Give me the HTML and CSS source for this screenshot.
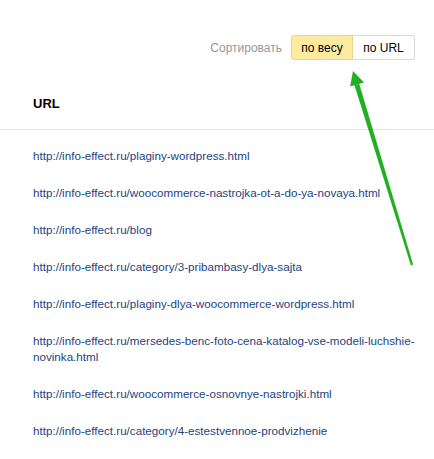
FILE: index.html
```html
<!DOCTYPE html>
<html lang="ru">
<head>
    <meta charset="UTF-8">
    <meta name="viewport" content="width=device-width, initial-scale=1.0">
    <title>URL</title>
    <link rel="stylesheet" href="styles.css">
</head>
<body>
    <div class="page">
        <div class="toolbar">
            <span class="sort-label">Сортировать</span>
            <div class="sort-group">
                <a href="javascript:;" class="sort-btn active">по весу</a>
                <a href="javascript:;" class="sort-btn">по URL</a>
            </div>
        </div>
        <div class="table-head">URL</div>
        <ul class="url-list">
            <li><a href="javascript:;">http://info-effect.ru/plaginy-wordpress.html</a></li>
            <li><a href="javascript:;">http://info-effect.ru/woocommerce-nastrojka-ot-a-do-ya-novaya.html</a></li>
            <li><a href="javascript:;">http://info-effect.ru/blog</a></li>
            <li><a href="javascript:;">http://info-effect.ru/category/3-pribambasy-dlya-sajta</a></li>
            <li><a href="javascript:;">http://info-effect.ru/plaginy-dlya-woocommerce-wordpress.html</a></li>
            <li><a href="javascript:;">http://info-effect.ru/mersedes-benc-foto-cena-katalog-vse-modeli-luchshie-novinka.html</a></li>
            <li><a href="javascript:;">http://info-effect.ru/woocommerce-osnovnye-nastrojki.html</a></li>
            <li><a href="javascript:;">http://info-effect.ru/category/4-estestvennoe-prodvizhenie</a></li>
        </ul>
        <!-- стрелка поверх страницы -->
        <svg class="arrow" width="434" height="459" viewBox="0 0 434 459">
            <polygon points="359.2,83.7 354.4,85.1 410.9,265.4 413.1,264.6" fill="#21b021"/>
            <polygon points="353,71 350.1,86.6 364,82.4" fill="#21b021"/>
        </svg>
    </div>
</body>
</html>
```

FILE: styles.css
```css
* {
    margin: 0;
    padding: 0;
}
body {
    font-family: "Liberation Sans", Arial, sans-serif;
    background: #fff;
}
.page {
    position: relative;
    width: 434px;
    height: 459px;
    overflow: hidden;
}
.toolbar {
    display: flex;
    justify-content: flex-end;
    align-items: center;
    gap: 9px;
    padding: 35px 19px 0 0;
}
.sort-label {
    font-size: 12px;
    color: #999;
}
.sort-group {
    display: flex;
}
.sort-btn {
    display: flex;
    align-items: center;
    justify-content: center;
    width: 62px;
    height: 25px;
    box-sizing: border-box;
    font-size: 12px;
    color: #000;
    text-decoration: none;
    border: 1px solid #d9d9d9;
    background: #fff;
}
.sort-btn:first-child {
    border-radius: 3px 0 0 3px;
}
.sort-btn:last-child {
    border-left: none;
    border-radius: 0 3px 3px 0;
}
.sort-btn.active {
    background: #ffeba0;
    border-color: #e6d48c;
}
.table-head {
    padding: 36px 0 18px 33px;
    font-size: 13px;
    font-weight: bold;
    color: #000;
    border-bottom: 1px solid #e5e5e5;
}
.url-list {
    list-style: none;
    display: flex;
    flex-direction: column;
    gap: 21px;
    padding: 18px 14px 0 33px;
}
.url-list li {
    font-size: 11.65px;
    line-height: 16px;
}
.url-list a {
    color: #24437f;
    text-decoration: none;
}
.arrow {
    position: absolute;
    left: 0;
    top: 0;
}
```
